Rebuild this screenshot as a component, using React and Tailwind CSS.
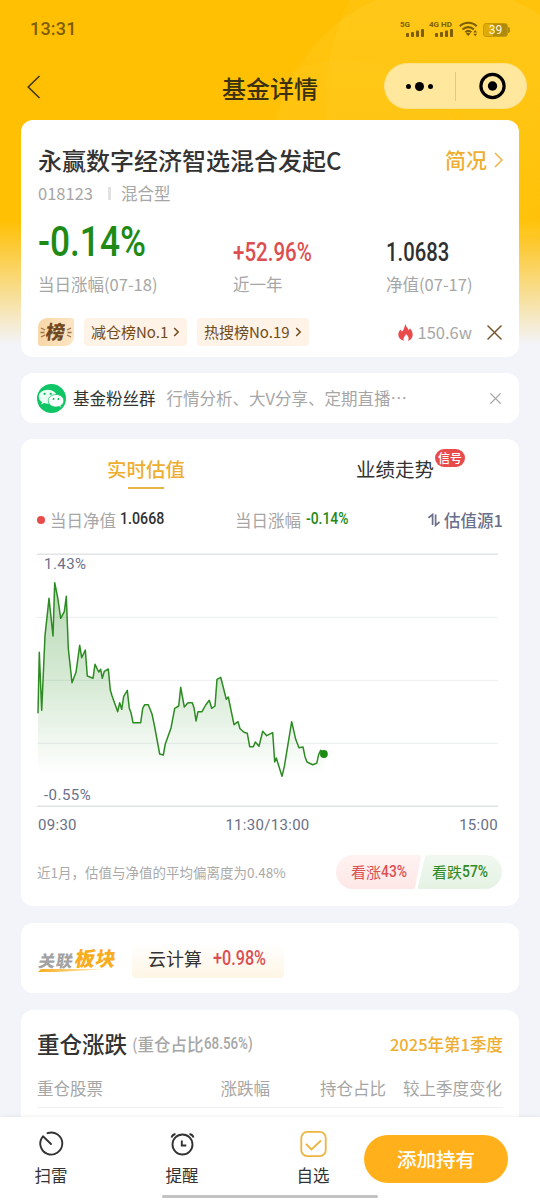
import clsx from "clsx";
import { LuX } from "react-icons/lu";

const chartPoints = [
  [1, 160.3], [2.3, 99.3], [4.7, 157.3], [8, 82.7], [12, 45.3], [16, 83], [17.7, 29.7], [20.7, 44.7],
  [23.7, 65.3], [27.3, 58.7], [29.3, 43.3], [31.3, 95.3], [35, 129.7], [39, 119.3], [42.7, 92.3],
  [44.7, 104.7], [48.3, 97], [50.3, 123], [56, 125.3], [58, 111.3], [61.7, 119], [63.7, 116.3],
  [65.3, 125.3], [67.3, 118.3], [71.3, 116], [73.3, 137], [75, 142.7], [80.7, 158.7], [82.7, 149.7],
  [84.7, 156.3], [86.7, 143.3], [90.3, 137.3], [92.3, 155.3], [94, 159.7], [96, 169.7], [103.7, 169.7],
  [105.7, 155.3], [107.7, 151.7], [111.3, 151.7], [115, 161], [117.3, 172], [122.7, 201], [126.3, 202],
  [128.3, 191], [134, 175], [137.7, 155.3], [141.7, 153], [143.7, 134.3], [147.3, 154], [151, 149.7],
  [155.3, 149.7], [157, 154.7], [159, 168], [161, 158.7], [165, 158.7], [168.7, 152], [172.3, 147.3],
  [174.7, 155.3], [178, 153], [180, 126.3], [183.7, 124.3], [189.3, 146.3], [191.3, 144], [197, 171.7],
  [201, 168.7], [203, 175.7], [207, 179.3], [210.3, 180.3], [212.7, 193.7], [216.3, 193.7], [218.3, 189],
  [222, 193.3], [225.7, 178.3], [229.7, 182.7], [235.7, 179.7], [237.7, 209], [239.3, 205], [245, 223.3],
  [247.3, 213.7], [254.7, 168.7], [258.7, 186.3], [262, 194.7], [266, 194], [268, 203.7], [270, 209],
  [275.7, 211.7], [279.7, 210.3], [281.7, 201.3], [283.7, 197.3], [286.7, 200.7],
];

// Condensed figures
const Num = ({ className, children }) => (
  <span className={clsx("inline-block origin-left whitespace-nowrap font-['Roboto',sans-serif]", className)}>
    {children}
  </span>
);

const Card = ({ className, children }) => (
  <div className={clsx("mx-[21px] shrink-0 rounded-xl bg-white", className)}>{children}</div>
);

const Signal = () => (
  <svg width="18" height="8" viewBox="0 0 18 8" fill="#7d5e05">
    <rect x="0" y="4" width="3" height="4" rx=".8" />
    <rect x="5" y="3" width="3" height="5" rx=".8" />
    <rect x="10" y="1.5" width="3" height="6.5" rx=".8" />
    <rect x="15" y="0" width="3" height="8" rx=".8" />
  </svg>
);

const StatusBar = () => (
  <div className="flex h-[60px] shrink-0 items-center pl-[30px] pr-[30px] text-[#7d5e05]">
    <span className="mt-[-3px] font-['Roboto',sans-serif] text-[18px] font-medium tracking-[0.2px]">13:31</span>
    <div className="mb-[4px] ml-auto flex h-[18px] items-end">
      <div className="flex w-[25px] flex-col items-end pr-px">
        <span className="w-full font-['Roboto',sans-serif] text-[8px] font-bold leading-[9px]">5G</span>
        <Signal />
      </div>
      <div className="ml-[4px] flex w-[25px] flex-col items-end pr-px">
        <span className="w-full whitespace-nowrap font-['Roboto',sans-serif] text-[8px] font-bold leading-[9px]">4G HD</span>
        <Signal />
      </div>
      <svg className="ml-[5px]" width="20" height="16" viewBox="0 0 20 16" fill="none" stroke="#7d5e05" strokeWidth="2.1">
        <path d="M.8 5.2C5.5.6 13 .6 17.7 5.2M3.6 8.4c3.2-3 8.1-3 11.3 0M6.3 11.3c1.8-1.6 4.3-1.6 6 0" />
        <path d="M6.8 12.5L9.2 15l2.4-2.5q-2.4-1.6-4.8 0z" fill="#7d5e05" stroke="none" />
        <path d="M14.3 11.5l1.9-2.4 1.9 2.4zM14.3 12.8l1.9 2.4 1.9-2.4z" fill="#7d5e05" stroke="none" />
      </svg>
      <div className="ml-[4px] flex items-center">
        <div className="flex h-[14px] w-[25px] items-center justify-center rounded-[3px] border border-[#c69b0a] bg-[linear-gradient(90deg,#dfab09_39%,#b08b0b_39%)]">
          <span className="font-['Roboto',sans-serif] text-[12px] leading-none text-[#fff6dc]">39</span>
        </div>
        <div className="h-[6px] w-[2px] rounded-r bg-[#b08b0b]" />
      </div>
    </div>
  </div>
);

const NavBar = () => (
  <div className="flex h-[60px] shrink-0 items-start">
    <svg className="ml-[26px] mt-[15px]" width="16" height="24" viewBox="0 0 16 24" fill="none" stroke="#3d3211" strokeWidth="1.5">
      <path d="M13.5 1L2.2 12l11.3 11" />
    </svg>
    <h1 className="ml-[180px] mt-[10px] text-[24px] font-medium leading-[36px] text-[#3b310f]">基金详情</h1>
    <div className="ml-[66px] mt-[3px] flex h-[46px] w-[143px] items-center rounded-full border border-[#fbe08a] bg-[#ffe79d]">
      <div className="flex w-[70px] items-center justify-center gap-[4px] pr-[2px]">
        <i className="h-[5px] w-[5px] rounded-full bg-black" />
        <i className="h-[9px] w-[9px] rounded-full bg-black" />
        <i className="h-[5px] w-[5px] rounded-full bg-black" />
      </div>
      <div className="h-[29px] w-px bg-[#e0c989]" />
      <svg className="ml-[23px]" width="28" height="28" viewBox="0 0 28 28">
        <circle cx="13.5" cy="14" r="11.6" fill="none" stroke="#000" strokeWidth="3.2" />
        <circle cx="13.5" cy="14" r="4.7" />
      </svg>
    </div>
  </div>
);

const RankTag = ({ className, children }) => (
  <div className={clsx("flex h-[28px] items-center rounded-[4px] bg-[#fff2e6] pl-[7px] text-[15px] text-[#6f4c1c]", className)}>
    {children}
    <svg className="ml-[5px]" width="7" height="10" viewBox="0 0 7 10" fill="none" stroke="#6f4c1c" strokeWidth="1.5">
      <path d="M1.2 1l4 4-4 4" />
    </svg>
  </div>
);

const FundCard = () => (
  <Card className="h-[237px] pl-[17px] pr-[16px] pt-[24px]">
    <div className="flex h-[32px] items-center justify-between">
      <h2 className="whitespace-nowrap text-[24px] font-medium text-[#333]">永赢数字经济智选混合发起C</h2>
      <div className="flex items-center gap-[7px] text-[21px] font-medium text-[#eeae32]">
        简况
        <svg width="9" height="16" viewBox="0 0 9 16" fill="none" stroke="#eeae32" strokeWidth="1.4">
          <path d="M1 1l7 7-7 7" />
        </svg>
      </div>
    </div>
    <div className="mt-[5px] flex h-[24px] items-center text-[16.5px] text-[#a6a6a6]">
      <span>018123</span>
      <i className="ml-[15px] mr-[10px] h-[13px] w-[3px] bg-[#e2e2e2]" />
      <span>混合型</span>
    </div>
    <div className="flex h-[116px] text-[16.5px] text-[#a6a6a6]">
      <div className="w-[195px] pt-[11px]">
        <div className="h-[56px] leading-[52px]">
          <Num className="scale-x-[0.84] text-[42px] font-medium text-[#208a16]">-0.14%</Num>
        </div>
        <div className="leading-[25px]">当日涨幅(07-18)</div>
      </div>
      <div className="w-[153px] pt-[25px]">
        <div className="h-[42px] leading-[45px]">
          <Num className="scale-x-[0.82] text-[25px] font-medium text-[#dc4e50]">+52.96%</Num>
        </div>
        <div className="leading-[25px]">近一年</div>
      </div>
      <div className="pt-[25px]">
        <div className="h-[42px] leading-[45px]">
          <Num className="scale-x-[0.81] text-[25px] font-medium text-[#2f3031]">1.0683</Num>
        </div>
        <div className="whitespace-nowrap leading-[25px]">净值(07-17)</div>
      </div>
    </div>
    <div className="mt-[-3px] flex h-[28px] items-center">
      <div className="flex h-[28px] w-[36px] items-center justify-center rounded-[9px_3px_9px_3px] bg-[linear-gradient(90deg,#f8d7a8,#fce5c3)]">
        <svg width="36" height="28" viewBox="0 0 36 28">
          <path d="M3 10l4 2M2.500 14.500h4M3 19l4-2M33 10l-4 2M33.500 14.500h-4M33 19l-4-2" stroke="#9a7446" strokeWidth="1.300" />
          <text x="7.500" y="21" fontSize="19" fontWeight="900" fill="#704923" transform="skewX(-8) translate(2.500 0)">榜</text>
        </svg>
      </div>
      <RankTag className="ml-[10px] w-[103px]">减仓榜No.1</RankTag>
      <RankTag className="ml-[10px] w-[112px]">热搜榜No.19</RankTag>
      <svg className="ml-auto" width="15" height="17" viewBox="0 0 15 17" fill="#e94b4c">
        <path d="M7.600 0c.3 3.100 2.500 4.200 3.100 6.200.7-.5 1-1.200 1.100-2 2 2 3 4.500 2.900 6.800-.1 2.900-1.900 5.100-4.700 5.900 1.500-2.600.1-5-2.100-6.800-.2 1.400-.9 1.900-1.700 2.800-.9 1.200-.9 2.700-.2 3.900C2.800 16.100.5 14 .3 11.100.2 8.600 1.400 7 2.600 5.600c.2.900.6 1.400 1.200 1.900C6.500 5.700 6.200 2.500 7.600 0z" />
      </svg>
      <span className="ml-[5px] text-[16.500px] text-[#a6a6a6]">150.6w</span>
      <svg className="ml-[15px] mr-px" width="15" height="15" viewBox="0 0 15 15" stroke="#7c572d" strokeWidth="1.500">
        <path d="M.5.5l14 14M14.500.5l-14 14" />
      </svg>
    </div>
  </Card>
);

const GroupCard = () => (
  <Card className="mt-[16px] flex h-[50px] items-center pl-[16px] pr-[14px] pt-px">
    <svg className="mb-px" width="29" height="29" viewBox="0 0 29 29">
      <circle cx="14.500" cy="14.500" r="14.500" fill="#10c566" />
      <path d="M10.800 5.800c-5 0-9 3.100-9 7 0 2.200 1.200 4 3.200 5.300l-.8 2.500 2.900-1.500c1.200.4 2.400.6 3.700.6 5 0 9-3.100 9-6.900s-4-7-9-7z" fill="#e9fff3" />
      <path d="M19 10.500c-4.300 0-7.700 2.700-7.700 6.200s3.400 6.300 7.700 6.300c1 0 2-.2 3-.5l2.500 1.300-.7-2.200c1.900-1.200 3-2.900 3-4.900 0-3.500-3.500-6.200-7.800-6.200z" fill="#fff" stroke="#10c566" strokeWidth=".8" />
      <g fill="#10b65e">
        <circle cx="7.600" cy="9.800" r="1.100" />
        <circle cx="13.700" cy="9.800" r="1.100" />
        <circle cx="16.500" cy="15" r="1" />
        <circle cx="21.500" cy="15" r="1" />
      </g>
    </svg>
    <span className="ml-[7px] text-[16.500px] text-[#333]">基金粉丝群</span>
    <span className="ml-[11px] whitespace-nowrap text-[16.500px] text-[#a6a6a6]">行情分析、大V分享、定期直播⋯</span>
    <LuX className="ml-auto h-[19px] w-[19px] text-[#aaa]" strokeWidth={1.6} />
  </Card>
);

const Chart = () => {
  const line = chartPoints.map((p) => p.join(",")).join(" ");
  return (
    <div className="relative h-[255px]">
      <svg width="461" height="255" viewBox="0 0 461 255">
        <defs>
          <linearGradient id="area" x1="0" y1="29" x2="0" y2="222" gradientUnits="userSpaceOnUse">
            <stop offset="0" stopColor="#208a16" stopOpacity=".32" />
            <stop offset=".55" stopColor="#208a16" stopOpacity=".17" />
            <stop offset="1" stopColor="#208a16" stopOpacity="0" />
          </linearGradient>
        </defs>
        <path d="M0 1.200h461M0 253.300h461" stroke="#e1e3e5" strokeWidth="1.400" />
        <path d="M0 64.300h461M0 127.300h461M0 190.300h461" stroke="#eff1f2" strokeWidth="1.200" />
        <polygon points={`1,222 ${line} 286.700,222`} fill="url(#area)" />
        <polyline points={line} fill="none" stroke="#2c8b22" strokeWidth="1.500" strokeLinejoin="round" />
        <circle cx="286.900" cy="201" r="3.900" fill="#1d8b13" />
      </svg>
      <span className="absolute left-[7px] top-[2px] font-['Roboto',sans-serif] text-[15px] leading-[18px] tracking-[0.45px] text-[#6b708a]">1.43%</span>
      <span className="absolute left-[7px] top-[233px] font-['Roboto',sans-serif] text-[15px] leading-[18px] tracking-[0.45px] text-[#6b708a]">-0.55%</span>
    </div>
  );
};

const EstimateCard = () => (
  <Card className="mt-[16px] h-[467px] px-[16px]">
    <div className="flex h-[60px] pt-[15px] text-[19.500px] leading-[30px]">
      <div className="ml-[70px] flex flex-col items-center font-medium text-[#eeae32]">
        实时估值
        <i className="mt-[3px] h-[2px] w-[36px] bg-[#e6b546]" />
      </div>
      <div className="relative ml-[171px] text-[#333]">
        业绩走势
        <span className="absolute -right-[31px] -top-[5px] flex h-[18px] w-[30px] items-center justify-center rounded-full bg-[#e84b4c] text-[12px] font-medium text-white">信号</span>
      </div>
    </div>
    <div className="flex h-[42px] items-center text-[16.500px] text-[#a6a6a6]">
      <i className="h-[8px] w-[8px] rounded-full bg-[#e74b4c]" />
      <span className="ml-[5px]">当日净值</span>
      <Num className="ml-[4px] mt-[-1px] w-[54px] scale-x-[0.86] text-[16.500px] font-medium text-[#2f3031]">1.0668</Num>
      <span className="ml-[61px]">当日涨幅</span>
      <Num className="ml-[5px] mt-[-1px] w-[52px] scale-x-[0.84] text-[16.500px] font-medium text-[#208a16]">-0.14%</Num>
      <div className="ml-auto flex items-center gap-[4px] text-[16.500px] font-medium text-[#6b708a]">
        <svg width="12" height="14" viewBox="0 0 12 14" fill="none" stroke="#6b708a" strokeWidth="1.700">
          <path d="M.4 4.800L4.600 1.500v10.500M7.600 1.500v10.800L11.600 9" />
        </svg>
        估值源1
      </div>
    </div>
    <div className="mt-[12px]">
      <Chart />
    </div>
    <div className="flex h-[35px] items-center justify-between pl-px pr-[5px] font-['Roboto',sans-serif] text-[15px] tracking-[0.3px] text-[#696e86]">
      <span>09:30</span>
      <span className="mr-px">11:30/13:00</span>
      <span>15:00</span>
    </div>
    <div className="mt-[12px] flex h-[34px] items-center justify-between pr-px">
      <span className="text-[13.500px] text-[#aaa]">近1月，估值与净值的平均偏离度为0.48%</span>
      <div className="relative flex h-[34px] w-[166px] items-center">
        <svg className="absolute inset-0" width="166" height="34" viewBox="0 0 166 34">
          <defs>
            <linearGradient id="up" x1="0" y1="0" x2="0" y2="1">
              <stop stopColor="#fff3f2" />
              <stop offset="1" stopColor="#fde7e6" />
            </linearGradient>
            <linearGradient id="down" x1="0" y1="0" x2="0" y2="1">
              <stop stopColor="#f1f8f0" />
              <stop offset="1" stopColor="#e4f2e3" />
            </linearGradient>
          </defs>
          <path d="M17 0H83q2.500 0 2 2l-6 30q-.5 2-2.500 2H17A17 17 0 0117 0z" fill="url(#up)" />
          <path d="M91 0H149A17 17 0 01149 34H84q-2.500 0-2-2l7-30q.5-2 2-2z" fill="url(#down)" />
        </svg>
        <div className="relative flex items-center pl-[15px] pt-px text-[15px] text-[#db5053]">
          看涨<Num className="w-[35px] scale-x-[0.84] text-[16.500px] font-medium">43%</Num>
        </div>
        <div className="relative flex items-center pl-[16px] pt-px text-[15px] text-[#308a26]">
          看跌<Num className="w-[30px] scale-x-[0.84] text-[16.500px] font-medium">57%</Num>
        </div>
      </div>
    </div>
  </Card>
);

const SectorCard = () => (
  <Card className="mt-[17px] flex h-[70px] items-center pl-[16px]">
    <svg width="84" height="40" viewBox="0 0 84 40">
      <defs>
        <linearGradient id="swoosh" x1="0" x2="1">
          <stop stopColor="#f8ad20" />
          <stop offset="1" stopColor="#fff1cf" />
        </linearGradient>
      </defs>
      <g transform="skewX(-10)" fontWeight="900">
        <text x="6" y="29" fontSize="16.500" letterSpacing=".8" fill="#a3a3a3">关联</text>
        <text x="42" y="28.500" fontSize="20" letterSpacing=".6" fill="#f8ad20">板块</text>
      </g>
      <path d="M4 31H70q-30 2-52 3H1z" fill="url(#swoosh)" />
    </svg>
    <div className="ml-[11px] mt-[4px] flex h-[35px] w-[152px] items-center rounded-[4px] bg-[linear-gradient(180deg,#fff_0%,#fef5e5_100%)] pb-[3px] pl-[16px] text-[18px] text-[#333]">
      云计算
      <Num className="ml-[11px] scale-x-[0.83] text-[19.500px] font-medium text-[#d94f52]">+0.98%</Num>
    </div>
  </Card>
);

const HoldingsCard = () => (
  <Card className="mt-[17px] h-[190px] px-[16px] pt-[17px]">
    <div className="flex h-[34px] items-center">
      <h3 className="text-[22.500px] font-medium text-[#333]">重仓涨跌</h3>
      <span className="ml-[5px] flex items-center whitespace-nowrap text-[16.500px] text-[#a6a6a6]">
        (<span className="font-medium">重仓占比</span>
        <Num className="w-[50px] scale-x-[0.81] text-[16.500px] font-medium">68.56%)</Num>
      </span>
      <span className="ml-auto text-[16.500px] font-medium text-[#eeae32]">2025年第1季度</span>
    </div>
    <div className="flex h-[47px] items-center border-b border-[#f0f0f0] pr-px pt-[9px] text-[16.500px] text-[#a6a6a6]">
      <span>重仓股票</span>
      <span className="ml-auto">涨跌幅</span>
      <span className="ml-[50px]">持仓占比</span>
      <span className="ml-[17px]">较上季度变化</span>
    </div>
  </Card>
);

const BottomBar = () => (
  <div className="absolute inset-x-0 bottom-0 h-[83px] bg-white shadow-[0_-1px_3px_rgba(0,0,0,0.06)]">
    <div className="flex pt-[13px] text-[16.500px] leading-[24px] text-[#333]">
      <div className="ml-[34px] flex w-[34px] flex-col items-center gap-[5px]">
        <svg width="28" height="28" viewBox="0 0 28 28" fill="none" stroke="#333" strokeWidth="1.900" strokeLinecap="round">
          <path d="M10.500 3.200A11 11 0 116 6.300L14 14" strokeLinejoin="round" />
        </svg>
        扫雷
      </div>
      <div className="ml-[97px] flex w-[34px] flex-col items-center gap-[5px]">
        <svg width="28" height="28" viewBox="0 0 28 28" fill="none" stroke="#333" strokeWidth="1.900">
          <circle cx="14.500" cy="14.500" r="10" />
          <path d="M13.800 10.500v5h4.500M3.500 7.500q1-3 4-3.500M25.500 7.500q-1-3-4-3.500" />
        </svg>
        提醒
      </div>
      <div className="ml-[97px] flex w-[34px] flex-col items-center gap-[5px]">
        <svg width="28" height="28" viewBox="0 0 28 28" fill="none" stroke="#edb440" strokeWidth="1.800">
          <rect x="2.300" y="1.800" width="24.400" height="24.400" rx="6" />
          <path d="M7 14l5.500 5.500 9.500-9" />
        </svg>
        自选
      </div>
      <button className="ml-[34px] mt-[5px] h-[48px] w-[144px] rounded-full bg-[#ffb01b] text-[19.500px] font-medium text-white">添加持有</button>
    </div>
    <div className="absolute bottom-[2px] left-[162px] h-[3px] w-[216px] rounded-full bg-[#c2c2c2]" />
  </div>
);

export default function App() {
  return (
    <div className="relative h-[1200px] w-[540px] overflow-hidden bg-[#f3f4fa] font-['Noto_Sans_CJK_SC',sans-serif]">
      <div className="absolute inset-x-0 top-0 h-[360px] bg-[linear-gradient(180deg,#ffbf02_0,#ffbf02_220px,#f3f4fa_345px)]">
        <svg width="540" height="235" viewBox="0 0 540 235">
          <defs>
            <linearGradient id="fade" x1="0" y1="0" x2="0" y2="1">
              <stop stopColor="#ffda48" stopOpacity=".2" />
              <stop offset="1" stopColor="#ffda48" stopOpacity="0" />
            </linearGradient>
          </defs>
          <circle cx="444" cy="158" r="172" fill="url(#fade)" />
          <circle cx="552" cy="100" r="226" fill="url(#fade)" />
          <circle cx="345" cy="190" r="130" fill="url(#fade)" opacity=".4" />
        </svg>
      </div>
      <div className="relative flex h-full flex-col">
        <StatusBar />
        <NavBar />
        <FundCard />
        <GroupCard />
        <EstimateCard />
        <SectorCard />
        <HoldingsCard />
      </div>
      <BottomBar />
    </div>
  );
}
